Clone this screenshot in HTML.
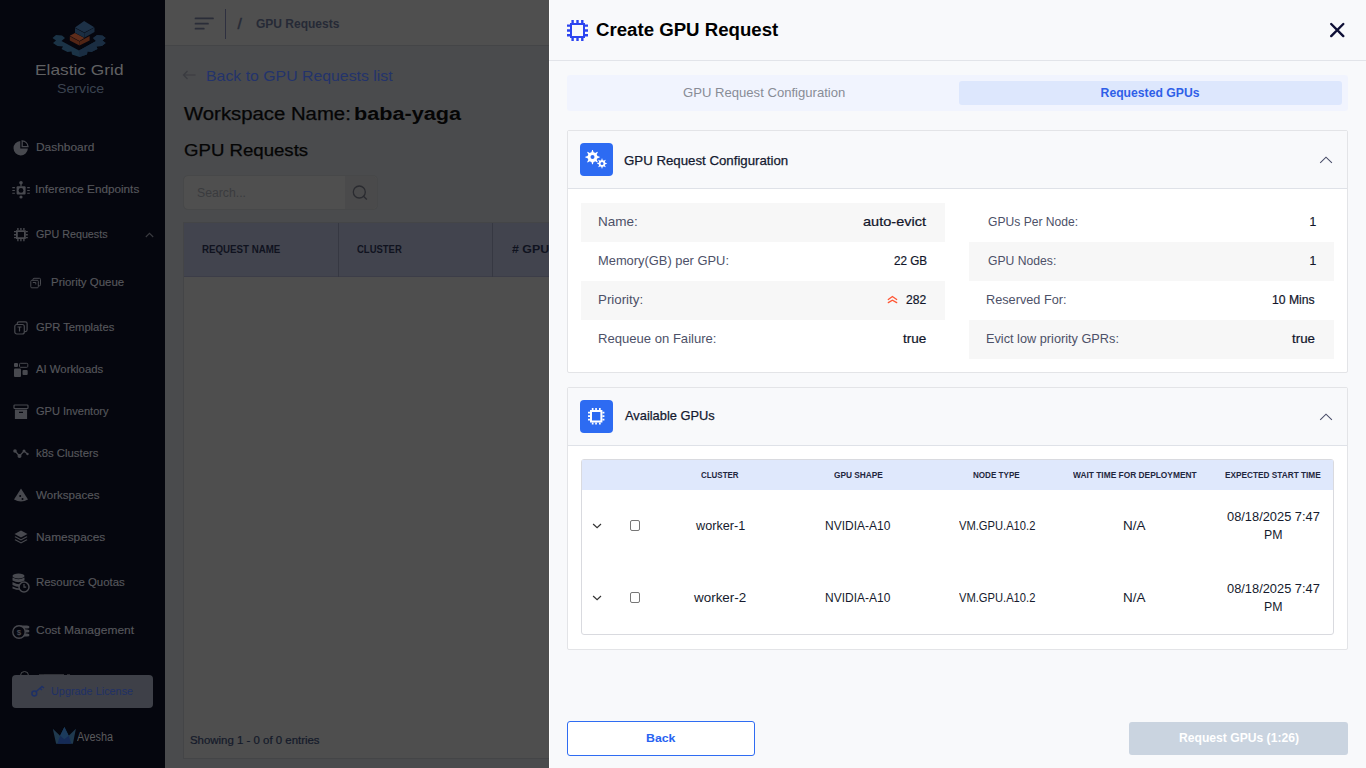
<!DOCTYPE html>
<html><head><meta charset="utf-8">
<style>
*{box-sizing:border-box;margin:0;padding:0}
html,body{width:1366px;height:768px;overflow:hidden;font-family:"Liberation Sans",sans-serif;background:#4a4b4d;position:relative}
.a{position:absolute}
.t{position:absolute;white-space:nowrap;line-height:1;font-family:"Liberation Sans",sans-serif}
svg{position:absolute;overflow:visible}
</style></head><body>
<!-- sidebar -->
<div class="a" style="left:0;top:0;width:165px;height:768px;background:#05060e"></div>
<!-- header -->
<div class="a" style="left:165px;top:0;width:1201px;height:45px;background:#4f4f4f"></div>
<div class="a" style="left:165px;top:45px;width:1201px;height:1px;background:#444547"></div>
<!-- search -->
<div class="a" style="left:183px;top:175px;width:195px;height:35px;border:1px solid #474849;border-radius:5px;background:#4f4f4f"></div>
<div class="a" style="left:345px;top:176px;width:32px;height:33px;border-radius:0 5px 5px 0;background:#4a4a4b"></div>
<!-- table -->
<div class="a" style="left:183px;top:222px;width:1183px;height:537px;border:1px solid #444547;background:#4e4e4e"></div>
<div class="a" style="left:184px;top:223px;width:1182px;height:54px;background:#42444e;border-bottom:1px solid #3c3d48"></div>
<div class="a" style="left:338px;top:223px;width:1px;height:54px;background:#363842"></div>
<div class="a" style="left:492px;top:223px;width:1px;height:54px;background:#363842"></div>
<!-- upgrade btn -->
<div class="a" style="left:12px;top:675px;width:141px;height:33px;border-radius:4px;background:#3e4048"></div>
<svg style="left:31px;top:685px" width="14" height="12" viewBox="0 0 14 12"><circle cx="3.3" cy="8.5" r="2.4" fill="none" stroke="#1e3066" stroke-width="1.5"/><path d="M5 6.8 L11.5 1 M9 3.2 L11 5 M11 1.5 L13 3" stroke="#1e3066" stroke-width="1.5" fill="none"/></svg>
<svg style="left:52px;top:726px" width="25" height="19" viewBox="0 0 25 19">
  <path fill="#1f394e" d="M0.8 2.8 L8.1 9.75 L12.4 0.9 L16.7 9.75 L23.9 2.8 L20.9 17.7 H4.1 Z"/>
  <path fill="#1b3a5c" d="M12.4 0.9 L18.6 13.5 L12.4 17.7 L6.2 13.5 Z"/>
  <path fill="#152a56" d="M8.1 9.75 L12.4 13.2 L16.7 9.75 L19.3 17.7 H5.5 Z"/>
</svg>


<!-- logo -->
<svg style="left:50px;top:18px" width="60" height="42" viewBox="0 0 60 42">
  <path fill="#1b3346" d="M2.5 20 L6 17 L12 17.5 L15 20 L11.5 23 L29 32.5 L46 23 L43 20 L47 17 L52.5 17.5 L55.7 20 L52.5 22.5 L55.7 25 L52 28 L46.5 28.5 L47.5 31 L41.5 34 L37.5 33.5 L37 36.5 L29.5 39 L22 36.5 L21.5 33.5 L17.5 34 L11.5 31 L13 28.5 L7.5 28 L3 25 L6 22.5 Z"/>
  <path fill="#1a2b40" d="M29 32.5 L46 23 L43 20 L47 17 L52.5 17.5 L55.7 20 L52.5 22.5 L55.7 25 L52 28 L46.5 28.5 L47.5 31 L41.5 34 L37.5 33.5 L37 36.5 L29.5 39 Z" opacity="0.7"/>
  <path fill="#532616" d="M19.8 18.2 L29.5 23.4 L29.5 27.6 L19.8 22.4 Z"/>
  <path fill="#512515" d="M29.5 23.4 L39.6 18 L39.6 22.4 L29.5 27.6 Z"/>
  <path fill="#5f2d1b" d="M19.8 17.7 L25 15 L34.4 20 L29.5 22.9 Z"/>
  <path fill="#1b2e42" d="M25 10 L34.4 15 L34.4 19.8 L25 14.8 Z"/>
  <path fill="#1a2c40" d="M34.4 15 L44.5 9.4 L44.5 14 L34.4 19.8 Z"/>
  <path fill="#1d3147" d="M25 9.6 L34.1 3.1 L44.3 9.2 L34.4 14.6 Z"/>
</svg>
<!-- sidebar icons -->
<svg style="left:13px;top:140px" width="16" height="16" viewBox="0 0 16 16">
  <path fill="#48494f" d="M7.3 1 A7.2 7.2 0 1 0 14.9 8.6 H7.3 Z"/>
  <path fill="none" stroke="#48494f" stroke-width="1.3" d="M9.2 0.8 A6.2 6.2 0 0 1 15 6.6 H9.2 Z"/>
</svg>
<svg style="left:12px;top:181px" width="18" height="18" viewBox="0 0 18 18">
  <rect x="4.6" y="5.2" width="9" height="8.4" rx="1" fill="#48494f"/>
  <circle cx="9" cy="9.4" r="2.4" fill="#05060e"/>
  <circle cx="9" cy="1.8" r="1.8" fill="#48494f"/><rect x="8.4" y="2.5" width="1.2" height="3" fill="#48494f"/>
  <circle cx="9" cy="16" r="1.6" fill="#48494f"/>
  <g stroke="#48494f" stroke-width="1.1"><path d="M0.3 6.6h2.6M0.3 9.5h2.6M0.3 12.2h2.6M15.2 6.6h2.6M15.2 9.5h2.6M15.2 12.2h2.6"/></g>
</svg>
<svg style="left:14px;top:228px" width="14" height="14" viewBox="0 0 14 14">
  <path fill="#48494f" fill-rule="evenodd" d="M2 2.2h9.8v8.8H2z M3.8 4.1v5.2h6.2V4.1z"/>
  <path fill="#48494f" d="M3.2 0h1.4v2.2H3.2zM6.2 0h1.4v2.2H6.2zM9.2 0h1.4v2.2H9.2zM3.2 11h1.4v2.2H3.2zM6.2 11h1.4v2.2H6.2zM9.2 11h1.4v2.2H9.2zM0 2.9h2v1.4H0zM0 6h2v1.4H0zM0 8.9h2v1.4H0zM11.8 2.9h2v1.4h-2zM11.8 6h2v1.4h-2zM11.8 8.9h2v1.4h-2z"/>
</svg>
<svg style="left:145px;top:232px" width="9" height="6" viewBox="0 0 9 6"><path d="M0.8 5 L4.5 1.3 L8.2 5" fill="none" stroke="#3a3b40" stroke-width="1.1"/></svg>
<svg style="left:30px;top:277px" width="12" height="12" viewBox="0 0 12 12" fill="none" stroke="#48494f" stroke-width="1">
  <rect x="0.8" y="3.3" width="7.5" height="7.5" rx="1"/><path d="M3 3.3V2.3a1 1 0 0 1 1 -1h5.5a1 1 0 0 1 1 1V7.8a1 1 0 0 1 -1 1H8.3"/><path d="M2.8 5.5h3v2" />
</svg>
<svg style="left:14px;top:321px" width="14" height="14" viewBox="0 0 14 14" fill="none" stroke="#48494f" stroke-width="1.2">
  <rect x="0.8" y="3.5" width="9.5" height="9.5" rx="2"/><path d="M3.2 3.5V2.6a1.8 1.8 0 0 1 1.8 -1.8h6.3a1.8 1.8 0 0 1 1.8 1.8V8.8a1.8 1.8 0 0 1 -1.8 1.8h-1"/><path d="M3.5 6h4M5.5 6v4.5"/>
</svg>
<svg style="left:14px;top:363px" width="14" height="14" viewBox="0 0 14 14" fill="#48494f">
  <rect x="0" y="0" width="4" height="4" rx="1"/><rect x="5.5" y="0.3" width="8.3" height="4" rx="1" fill="none" stroke="#48494f" stroke-width="1"/><rect x="0" y="5.5" width="7" height="8.5" rx="1"/><rect x="8.5" y="7" width="5.2" height="5" rx="1"/>
</svg>
<svg style="left:14px;top:405px" width="14" height="14" viewBox="0 0 14 14" fill="#48494f">
  <rect x="0" y="0" width="14" height="3.5" rx="0.8" fill="none" stroke="#48494f" stroke-width="1.2"/><path fill-rule="evenodd" d="M0.9 4.4h12.2V14H0.9z M5 6.8h4v1.2H5z"/>
</svg>
<svg style="left:13px;top:448px" width="16" height="11" viewBox="0 0 16 11" fill="#48494f">
  <circle cx="2" cy="3" r="1.8"/><circle cx="6.5" cy="8" r="2"/><circle cx="11" cy="3" r="1.5"/><circle cx="14.5" cy="6" r="1.2"/><path d="M2 3L6.5 8L11 3L14.5 6" stroke="#48494f" stroke-width="1.2" fill="none"/>
</svg>
<svg style="left:13px;top:488px" width="16" height="15" viewBox="0 0 16 15">
  <path fill="#48494f" d="M8 0.5 L15 11.5 Q8 15.5 1 11.5 Z"/><circle cx="7.2" cy="8" r="1" fill="#05060e"/><circle cx="9.5" cy="11" r="1" fill="#05060e"/>
</svg>
<svg style="left:14px;top:530px" width="14" height="14" viewBox="0 0 14 14" fill="#48494f">
  <path d="M7 0.5 L13.5 4 L7 7.5 L0.5 4 Z"/><path d="M1.5 6.2 L7 9.2 L12.5 6.2 L13.5 7 L7 10.5 L0.5 7 Z"/><path d="M1.5 9.2 L7 12.2 L12.5 9.2 L13.5 10 L7 13.5 L0.5 10 Z"/>
</svg>
<svg style="left:12px;top:573px" width="18" height="20" viewBox="0 0 18 20" fill="#48494f">
  <ellipse cx="6.5" cy="3" rx="6" ry="2.5"/><path d="M0.5 4.5 Q6.5 8 12.5 4.5 V7.5 Q6.5 11 0.5 7.5Z"/><path d="M0.5 9 Q6 12 9 11 L8 14 Q4 14 0.5 12Z"/><path d="M0.5 13.5 Q4 15.5 8 15.5 L9 17 Q4 17 0.5 15.5Z"/>
  <circle cx="12" cy="14" r="5" fill="#05060e" stroke="#48494f" stroke-width="1.5"/><path d="M12 11v3.2h2.2" stroke="#48494f" stroke-width="1.2" fill="none"/>
</svg>
<svg style="left:12px;top:623px" width="18" height="16" viewBox="0 0 18 16" fill="#48494f">
  <path d="M7 2.5 H15 Q17.5 2.5 17.5 4 Q17.5 5.5 15 5.5 H9Z"/><path d="M10 6.5 H15 Q17.5 6.5 17.5 8 Q17.5 9.5 15 9.5 H11Z"/><path d="M10 10.5 H15 Q17.5 10.5 17.5 12 Q17.5 13.5 15 13.5 H9Z"/>
  <circle cx="7" cy="9" r="6.2" fill="#05060e" stroke="#48494f" stroke-width="1.4"/><text x="7" y="12" font-size="8" font-family="Liberation Sans" font-weight="bold" text-anchor="middle" fill="#48494f">$</text>
</svg>
<!-- hidden item under upgrade btn -->
<div class="a" style="left:19.5px;top:670.5px;width:9px;height:4.5px;overflow:hidden"><div class="a" style="left:0;top:0;width:9px;height:9px;border:1.3px solid #4a4b50;border-radius:50%"></div></div>
<div class="a" style="left:39px;top:674px;width:12px;height:1px;background:#2a2b31"></div>
<div class="a" style="left:44px;top:673.5px;width:20px;height:1.5px;background:#303137"></div>
<div class="a" style="left:67px;top:674px;width:3px;height:1px;background:#2a2b31"></div>

<!-- header icons -->
<svg style="left:194px;top:16px" width="20" height="15" viewBox="0 0 20 15" stroke="#2a2d38" stroke-width="1.7" stroke-linecap="round"><path d="M1.5 2.4h17.5M1.5 7.7h12.5M1.5 12.7h8.3"/></svg>
<div class="a" style="left:225px;top:9px;width:1px;height:30px;background:#2e3040"></div>
<svg style="left:181px;top:69px" width="16" height="12" viewBox="0 0 16 12" stroke="#3a3b40" stroke-width="1.2" fill="none"><path d="M2.5 6h12M6.5 2L2.5 6L6.5 10"/></svg>
<svg style="left:350px;top:184px" width="20" height="20" viewBox="0 0 20 20" stroke="#2a2b30" stroke-width="1.3" fill="none"><circle cx="9.3" cy="8" r="6"/><path d="M13.5 12.3L16.8 15.5"/></svg>
<div class="t" id="t0" style="left:35.35px;top:62.00px;font-size:15px;color:#606062;transform:scaleX(1.1547);transform-origin:0 0;">Elastic Grid</div>
<div class="t" id="t1" style="left:56.70px;top:83.02px;font-size:12.5px;color:#3b4350;transform:scaleX(1.1335);transform-origin:0 0;">Service</div>
<div class="t" id="t2" style="left:36.25px;top:141.69px;font-size:11px;color:#56575c;transform:scaleX(1.0839);transform-origin:0 0;-webkit-text-stroke:0.15px currentColor;">Dashboard</div>
<div class="t" id="t3" style="left:34.93px;top:183.69px;font-size:11px;color:#56575c;transform:scaleX(1.0653);transform-origin:0 0;-webkit-text-stroke:0.15px currentColor;">Inference Endpoints</div>
<div class="t" id="t4" style="left:36.00px;top:228.69px;font-size:11px;color:#56575c;transform:scaleX(0.9748);transform-origin:0 0;-webkit-text-stroke:0.15px currentColor;">GPU Requests</div>
<div class="t" id="t5" style="left:51.00px;top:276.69px;font-size:11px;color:#56575c;transform:scaleX(1.0400);transform-origin:0 0;-webkit-text-stroke:0.15px currentColor;">Priority Queue</div>
<div class="t" id="t6" style="left:36.00px;top:321.69px;font-size:11px;color:#56575c;transform:scaleX(1.0190);transform-origin:0 0;-webkit-text-stroke:0.15px currentColor;">GPR Templates</div>
<div class="t" id="t7" style="left:36.00px;top:363.69px;font-size:11px;color:#56575c;transform:scaleX(1.0303);transform-origin:0 0;-webkit-text-stroke:0.15px currentColor;">AI Workloads</div>
<div class="t" id="t8" style="left:36.00px;top:405.69px;font-size:11px;color:#56575c;transform:scaleX(1.0050);transform-origin:0 0;-webkit-text-stroke:0.15px currentColor;">GPU Inventory</div>
<div class="t" id="t9" style="left:36.00px;top:447.69px;font-size:11px;color:#56575c;transform:scaleX(1.0325);transform-origin:0 0;-webkit-text-stroke:0.15px currentColor;">k8s Clusters</div>
<div class="t" id="t10" style="left:36.00px;top:489.69px;font-size:11px;color:#56575c;transform:scaleX(1.0523);transform-origin:0 0;-webkit-text-stroke:0.15px currentColor;">Workspaces</div>
<div class="t" id="t11" style="left:36.00px;top:531.69px;font-size:11px;color:#56575c;transform:scaleX(1.0789);transform-origin:0 0;-webkit-text-stroke:0.15px currentColor;">Namespaces</div>
<div class="t" id="t12" style="left:36.00px;top:576.69px;font-size:11px;color:#56575c;transform:scaleX(1.0372);transform-origin:0 0;-webkit-text-stroke:0.15px currentColor;">Resource Quotas</div>
<div class="t" id="t13" style="left:36.00px;top:624.69px;font-size:11px;color:#56575c;transform:scaleX(1.0910);transform-origin:0 0;-webkit-text-stroke:0.15px currentColor;">Cost Management</div>
<div class="t" id="t14" style="left:50.60px;top:685.99px;font-size:11px;color:#1e3066;transform:scaleX(0.9874);transform-origin:0 0;">Upgrade License</div>
<div class="t" id="t15" style="left:77.00px;top:731.04px;font-size:12px;color:#5a5a5d;transform:scaleX(0.9069);transform-origin:0 0;">Avesha</div>
<div class="t" id="t16" style="left:237.50px;top:16.48px;font-size:15.5px;color:#262a36;transform:scaleX(1.0000);transform-origin:0 0;-webkit-text-stroke:0.5px currentColor;">/</div>
<div class="t" id="t17" style="left:255.50px;top:17.84px;font-size:12px;color:#262a36;font-weight:bold;transform:scaleX(1.0002);transform-origin:0 0;">GPU Requests</div>
<div class="t" id="t18" style="left:206.44px;top:67.50px;font-size:15px;color:#23336b;transform:scaleX(1.0563);transform-origin:0 0;">Back to GPU Requests list</div>
<div class="t" id="t19" style="left:183.80px;top:105.98px;font-size:17.5px;color:#050505;transform:scaleX(1.1615);transform-origin:0 0;-webkit-text-stroke:0.25px currentColor;">Workspace Name:</div>
<div class="t" id="t20" style="left:353.76px;top:105.98px;font-size:17.5px;color:#050505;font-weight:bold;transform:scaleX(1.2374);transform-origin:0 0;">baba-yaga</div>
<div class="t" id="t21" style="left:183.80px;top:142.21px;font-size:17px;color:#050505;transform:scaleX(1.0950);transform-origin:0 0;-webkit-text-stroke:0.25px currentColor;">GPU Requests</div>
<div class="t" id="t22" style="left:196.50px;top:186.92px;font-size:12.5px;color:#3a3b3e;transform:scaleX(0.9788);transform-origin:0 0;">Search...</div>
<div class="t" id="t23" style="left:202.00px;top:243.99px;font-size:11px;color:#10131f;font-weight:bold;transform:scaleX(0.8835);transform-origin:0 0;">REQUEST NAME</div>
<div class="t" id="t24" style="left:356.70px;top:243.99px;font-size:11px;color:#10131f;font-weight:bold;transform:scaleX(0.8615);transform-origin:0 0;">CLUSTER</div>
<div class="t" id="t25" style="left:512.00px;top:243.99px;font-size:11px;color:#10131f;font-weight:bold;transform:scaleX(1.1247);transform-origin:0 0;"># GPUS</div>
<div class="t" id="t26" style="left:190.00px;top:734.81px;font-size:10.5px;color:#141a2a;transform:scaleX(1.0882);transform-origin:0 0;-webkit-text-stroke:0.2px currentColor;">Showing 1 - 0 of 0 entries</div>
<!-- drawer -->
<div class="a" style="left:549px;top:0;width:817px;height:768px;background:#f8f9fb"></div>
<div class="a" style="left:549px;top:0;width:1px;height:768px;background:#ffffff"></div>
<div class="a" style="left:549px;top:60px;width:817px;height:1px;background:#e2e4e9"></div>
<!-- tabs -->
<div class="a" style="left:567px;top:75px;width:781px;height:36px;background:#f1f4fe;border-radius:3px"></div>
<div class="a" style="left:959px;top:81px;width:383px;height:24px;background:#dde7fd;border-radius:3px"></div>
<!-- card 1 -->
<div class="a" style="left:567px;top:130px;width:781px;height:243px;border:1px solid #e3e4e7;background:#fff;border-radius:2px"></div>
<div class="a" style="left:568px;top:131px;width:779px;height:58px;background:#f8f9fb;border-bottom:1px solid #dfe2e8"></div>
<div class="a" style="left:580px;top:143px;width:33px;height:33px;border-radius:4px;background:#2d6bf2"></div>
<div class="a" style="left:581px;top:203px;width:364px;height:39px;background:#f7f7f7"></div>
<div class="a" style="left:581px;top:281px;width:364px;height:39px;background:#f7f7f7"></div>
<div class="a" style="left:969px;top:242px;width:365px;height:39px;background:#f7f7f7"></div>
<div class="a" style="left:969px;top:320px;width:365px;height:39px;background:#f7f7f7"></div>
<!-- card 2 -->
<div class="a" style="left:567px;top:387px;width:781px;height:263px;border:1px solid #e3e4e7;background:#fff;border-radius:2px"></div>
<div class="a" style="left:568px;top:388px;width:779px;height:58px;background:#f8f9fb;border-bottom:1px solid #dfe2e8"></div>
<div class="a" style="left:580px;top:400px;width:33px;height:33px;border-radius:4px;background:#2d6bf2"></div>
<div class="a" style="left:581px;top:459px;width:753px;height:176px;border:1px solid #d9dadf;border-radius:3px;background:#fff"></div>
<div class="a" style="left:582px;top:460px;width:751px;height:30px;background:#dfe8fc"></div>
<!-- checkboxes -->
<div class="a" style="left:629.5px;top:520px;width:10.5px;height:10.5px;border:1px solid #767676;border-radius:2px;background:#fff"></div>
<div class="a" style="left:629.5px;top:592px;width:10.5px;height:10.5px;border:1px solid #767676;border-radius:2px;background:#fff"></div>
<!-- buttons -->
<div class="a" style="left:567px;top:721px;width:188px;height:35px;border:1px solid #2f6cf2;border-radius:3px;background:#fff"></div>
<div class="a" style="left:1129px;top:722px;width:219px;height:33px;border-radius:3px;background:#cad4e0"></div>


<svg style="left:567px;top:20px" width="21" height="21" viewBox="0 0 21 21" fill="#2b44f0">
  <path fill-rule="evenodd" d="M3 3h15v15H3z M5 5v11h11V5z"/>
  <path d="M4.4 0h2.4v3H4.4zM9.3 0h2.4v3H9.3zM14.1 0h2.4v3h-2.4zM4.4 18h2.4v3H4.4zM9.3 18h2.4v3H9.3zM14.1 18h2.4v3h-2.4zM0 4.4h3v2.4H0zM0 9.3h3v2.4H0zM0 14.1h3v2.4H0zM18 4.4h3v2.4h-3zM18 9.3h3v2.4h-3zM18 14.1h3v2.4h-3z"/>
</svg>
<svg style="left:1326px;top:19px" width="21" height="21" viewBox="0 0 21 21" stroke="#0e0f36" stroke-width="2.4" stroke-linecap="round"><path d="M5.2 5L17.3 17.1M17.3 5L5.2 17.1"/></svg>
<svg style="left:580px;top:143px" width="33" height="33" viewBox="0 0 33 33"><path fill="#fff" fill-rule="evenodd" d="M10.59 9.48 L11.45 9.21 L12.10 6.91 L12.90 6.91 L13.55 9.21 L14.41 9.48 L15.21 9.90 L17.30 8.74 L17.86 9.30 L16.70 11.39 L17.12 12.19 L17.39 13.05 L19.69 13.70 L19.69 14.50 L17.39 15.15 L17.12 16.01 L16.70 16.81 L17.86 18.90 L17.30 19.46 L15.21 18.30 L14.41 18.72 L13.55 18.99 L12.90 21.29 L12.10 21.29 L11.45 18.99 L10.59 18.72 L9.79 18.30 L7.70 19.46 L7.14 18.90 L8.30 16.81 L7.88 16.01 L7.61 15.15 L5.31 14.50 L5.31 13.70 L7.61 13.05 L7.88 12.19 L8.30 11.39 L7.14 9.30 L7.70 8.74 L9.79 9.90 Z M10.50 14.10 a2.00 2.00 0 1 0 4.00 0 a2.00 2.00 0 1 0 -4.00 0 Z"/><path fill="#fff" fill-rule="evenodd" d="M20.70 17.36 L21.28 17.18 L21.73 15.61 L22.27 15.61 L22.72 17.18 L23.30 17.36 L23.84 17.64 L25.27 16.85 L25.65 17.23 L24.86 18.66 L25.14 19.20 L25.32 19.78 L26.89 20.23 L26.89 20.77 L25.32 21.22 L25.14 21.80 L24.86 22.34 L25.65 23.77 L25.27 24.15 L23.84 23.36 L23.30 23.64 L22.72 23.82 L22.27 25.39 L21.73 25.39 L21.28 23.82 L20.70 23.64 L20.16 23.36 L18.73 24.15 L18.35 23.77 L19.14 22.34 L18.86 21.80 L18.68 21.22 L17.11 20.77 L17.11 20.23 L18.68 19.78 L18.86 19.20 L19.14 18.66 L18.35 17.23 L18.73 16.85 L20.16 17.64 Z M20.50 20.50 a1.50 1.50 0 1 0 3.00 0 a1.50 1.50 0 1 0 -3.00 0 Z"/></svg>
<svg style="left:587px;top:407px" width="18" height="18" viewBox="0 0 18 18" fill="#fff">
  <path fill-rule="evenodd" d="M3 3h12.4v12.4H3z M5 5v8.4h8.4V5z"/>
  <path d="M4.8 1h1.7v2H4.8zM8.2 1h1.7v2H8.2zM12 1h1.7v2H12zM4.8 15.4h1.7v2H4.8zM8.2 15.4h1.7v2H8.2zM12 15.4h1.7v2H12zM1 4.8h2v1.7H1zM1 8.3h2v1.7H1zM1 11.8h2v1.7H1zM15.4 4.8h2v1.7h-2zM15.4 8.3h2v1.7h-2zM15.4 11.8h2v1.7h-2z"/>
</svg>
<svg style="left:1318px;top:154px" width="16" height="11" viewBox="0 0 16 11" stroke="#4a4e6a" stroke-width="1.1" fill="none"><path d="M2.2 8.9L8 3.2L13.9 8.9"/></svg>
<svg style="left:1318px;top:411px" width="16" height="11" viewBox="0 0 16 11" stroke="#4a4e6a" stroke-width="1.1" fill="none"><path d="M2.2 8.9L8 3.2L13.9 8.9"/></svg>
<svg style="left:886px;top:294px" width="12" height="11" viewBox="0 0 12 11" stroke="#ff5533" stroke-width="1.3" stroke-linecap="round" fill="none"><path d="M2.3 5.5L6.4 2.5L10.7 5.5M2.3 8.6L6.4 6.2L10.7 8.6"/></svg>
<svg style="left:590px;top:520px" width="14" height="10" viewBox="0 0 14 10" stroke="#333" stroke-width="1.2" fill="none"><path d="M3.1 4L7.1 7.6L11 4"/></svg>
<svg style="left:590px;top:592px" width="14" height="10" viewBox="0 0 14 10" stroke="#333" stroke-width="1.2" fill="none"><path d="M3.1 4L7.1 7.6L11 4"/></svg>
<div class="t" id="t27" style="left:595.70px;top:20.76px;font-size:18px;color:#000000;font-weight:bold;transform:scaleX(1.0354);transform-origin:0 0;">Create GPU Request</div>
<div class="t" id="t28" style="left:683.40px;top:86.57px;font-size:12.2px;color:#888c96;transform:scaleX(1.0746);transform-origin:0 0;">GPU Request Configuration</div>
<div class="t" id="t29" style="left:1100.60px;top:86.57px;font-size:12.2px;color:#2f5fe8;font-weight:bold;transform:scaleX(1.0000);transform-origin:0 0;">Requested GPUs</div>
<div class="t" id="t30" style="left:624.20px;top:153.89px;font-size:13px;color:#141a30;transform:scaleX(1.0192);transform-origin:0 0;-webkit-text-stroke:0.25px currentColor;">GPU Request Configuration</div>
<div class="t" id="t31" style="left:625.00px;top:409.09px;font-size:13px;color:#141a30;transform:scaleX(0.9879);transform-origin:0 0;-webkit-text-stroke:0.25px currentColor;">Available GPUs</div>
<div class="t" id="t32" style="left:598.39px;top:215.77px;font-size:12.2px;color:#4d5168;transform:scaleX(1.1098);transform-origin:0 0;">Name:</div>
<div class="t" id="t33" style="left:598.44px;top:254.77px;font-size:12.2px;color:#4d5168;transform:scaleX(1.0568);transform-origin:0 0;">Memory(GB) per GPU:</div>
<div class="t" id="t34" style="left:598.41px;top:293.77px;font-size:12.2px;color:#4d5168;transform:scaleX(1.0922);transform-origin:0 0;">Priority:</div>
<div class="t" id="t35" style="left:598.43px;top:332.77px;font-size:12.2px;color:#4d5168;transform:scaleX(1.0729);transform-origin:0 0;">Requeue on Failure:</div>
<div class="t" id="t36" style="left:987.50px;top:215.77px;font-size:12.2px;color:#4d5168;transform:scaleX(0.9936);transform-origin:0 0;">GPUs Per Node:</div>
<div class="t" id="t37" style="left:987.50px;top:254.77px;font-size:12.2px;color:#4d5168;transform:scaleX(0.9982);transform-origin:0 0;">GPU Nodes:</div>
<div class="t" id="t38" style="left:986.46px;top:293.77px;font-size:12.2px;color:#4d5168;transform:scaleX(1.0432);transform-origin:0 0;">Reserved For:</div>
<div class="t" id="t39" style="left:986.46px;top:332.77px;font-size:12.2px;color:#4d5168;transform:scaleX(1.0442);transform-origin:0 0;">Evict low priority GPRs:</div>
<div class="t" id="t40" style="left:863.00px;top:215.77px;font-size:12.2px;color:#12162a;transform:scaleX(1.1936);transform-origin:0 0;-webkit-text-stroke:0.2px currentColor;">auto-evict</div>
<div class="t" id="t41" style="left:893.80px;top:254.77px;font-size:12.2px;color:#12162a;transform:scaleX(0.9587);transform-origin:0 0;-webkit-text-stroke:0.2px currentColor;">22 GB</div>
<div class="t" id="t42" style="left:906.40px;top:293.77px;font-size:12.2px;color:#12162a;transform:scaleX(0.9924);transform-origin:0 0;-webkit-text-stroke:0.2px currentColor;">282</div>
<div class="t" id="t43" style="left:903.20px;top:332.77px;font-size:12.2px;color:#12162a;transform:scaleX(1.1120);transform-origin:0 0;-webkit-text-stroke:0.2px currentColor;">true</div>
<div class="t" id="t44" style="left:1309.50px;top:215.77px;font-size:12.2px;color:#12162a;transform:scaleX(1.0000);transform-origin:0 0;-webkit-text-stroke:0.2px currentColor;">1</div>
<div class="t" id="t45" style="left:1309.50px;top:254.77px;font-size:12.2px;color:#12162a;transform:scaleX(1.0000);transform-origin:0 0;-webkit-text-stroke:0.2px currentColor;">1</div>
<div class="t" id="t46" style="left:1272.20px;top:293.77px;font-size:12.2px;color:#12162a;transform:scaleX(1.0005);transform-origin:0 0;-webkit-text-stroke:0.2px currentColor;">10 Mins</div>
<div class="t" id="t47" style="left:1291.60px;top:332.77px;font-size:12.2px;color:#12162a;transform:scaleX(1.0932);transform-origin:0 0;-webkit-text-stroke:0.2px currentColor;">true</div>
<div class="t" id="t48" style="left:700.60px;top:470.78px;font-size:9px;color:#1f2740;font-weight:bold;transform:scaleX(0.8837);transform-origin:0 0;">CLUSTER</div>
<div class="t" id="t49" style="left:833.80px;top:470.78px;font-size:9px;color:#1f2740;font-weight:bold;transform:scaleX(0.9225);transform-origin:0 0;">GPU SHAPE</div>
<div class="t" id="t50" style="left:973.40px;top:470.78px;font-size:9px;color:#1f2740;font-weight:bold;transform:scaleX(0.8980);transform-origin:0 0;">NODE TYPE</div>
<div class="t" id="t51" style="left:1073.10px;top:470.78px;font-size:9px;color:#1f2740;font-weight:bold;transform:scaleX(0.9296);transform-origin:0 0;">WAIT TIME FOR DEPLOYMENT</div>
<div class="t" id="t52" style="left:1225.30px;top:470.78px;font-size:9px;color:#1f2740;font-weight:bold;transform:scaleX(0.9172);transform-origin:0 0;">EXPECTED START TIME</div>
<div class="t" id="t53" style="left:695.71px;top:519.62px;font-size:12.5px;color:#161b2e;transform:scaleX(1.0127);transform-origin:0 0;">worker-1</div>
<div class="t" id="t54" style="left:824.94px;top:519.62px;font-size:12.5px;color:#161b2e;transform:scaleX(0.9594);transform-origin:0 0;">NVIDIA-A10</div>
<div class="t" id="t55" style="left:958.70px;top:519.62px;font-size:12.5px;color:#161b2e;transform:scaleX(0.8936);transform-origin:0 0;">VM.GPU.A10.2</div>
<div class="t" id="t56" style="left:1122.92px;top:519.62px;font-size:12.5px;color:#161b2e;transform:scaleX(1.0780);transform-origin:0 0;">N/A</div>
<div class="t" id="t57" style="left:1226.90px;top:511.12px;font-size:12.5px;color:#161b2e;transform:scaleX(1.0275);transform-origin:0 0;">08/18/2025 7:47</div>
<div class="t" id="t58" style="left:1263.91px;top:528.62px;font-size:12.5px;color:#161b2e;transform:scaleX(0.9863);transform-origin:0 0;">PM</div>
<div class="t" id="t59" style="left:694.38px;top:591.62px;font-size:12.5px;color:#161b2e;transform:scaleX(1.0751);transform-origin:0 0;">worker-2</div>
<div class="t" id="t60" style="left:824.94px;top:591.62px;font-size:12.5px;color:#161b2e;transform:scaleX(0.9594);transform-origin:0 0;">NVIDIA-A10</div>
<div class="t" id="t61" style="left:958.70px;top:591.62px;font-size:12.5px;color:#161b2e;transform:scaleX(0.8936);transform-origin:0 0;">VM.GPU.A10.2</div>
<div class="t" id="t62" style="left:1122.92px;top:591.62px;font-size:12.5px;color:#161b2e;transform:scaleX(1.0780);transform-origin:0 0;">N/A</div>
<div class="t" id="t63" style="left:1226.90px;top:583.12px;font-size:12.5px;color:#161b2e;transform:scaleX(1.0275);transform-origin:0 0;">08/18/2025 7:47</div>
<div class="t" id="t64" style="left:1263.91px;top:600.62px;font-size:12.5px;color:#161b2e;transform:scaleX(0.9863);transform-origin:0 0;">PM</div>
<div class="t" id="t65" style="left:646.00px;top:732.81px;font-size:11.8px;color:#2763f2;font-weight:bold;transform:scaleX(1.0440);transform-origin:0 0;">Back</div>
<div class="t" id="t66" style="left:1178.50px;top:732.42px;font-size:12.5px;color:#ffffff;font-weight:bold;transform:scaleX(0.9702);transform-origin:0 0;">Request GPUs (1:26)</div>
</body></html>
